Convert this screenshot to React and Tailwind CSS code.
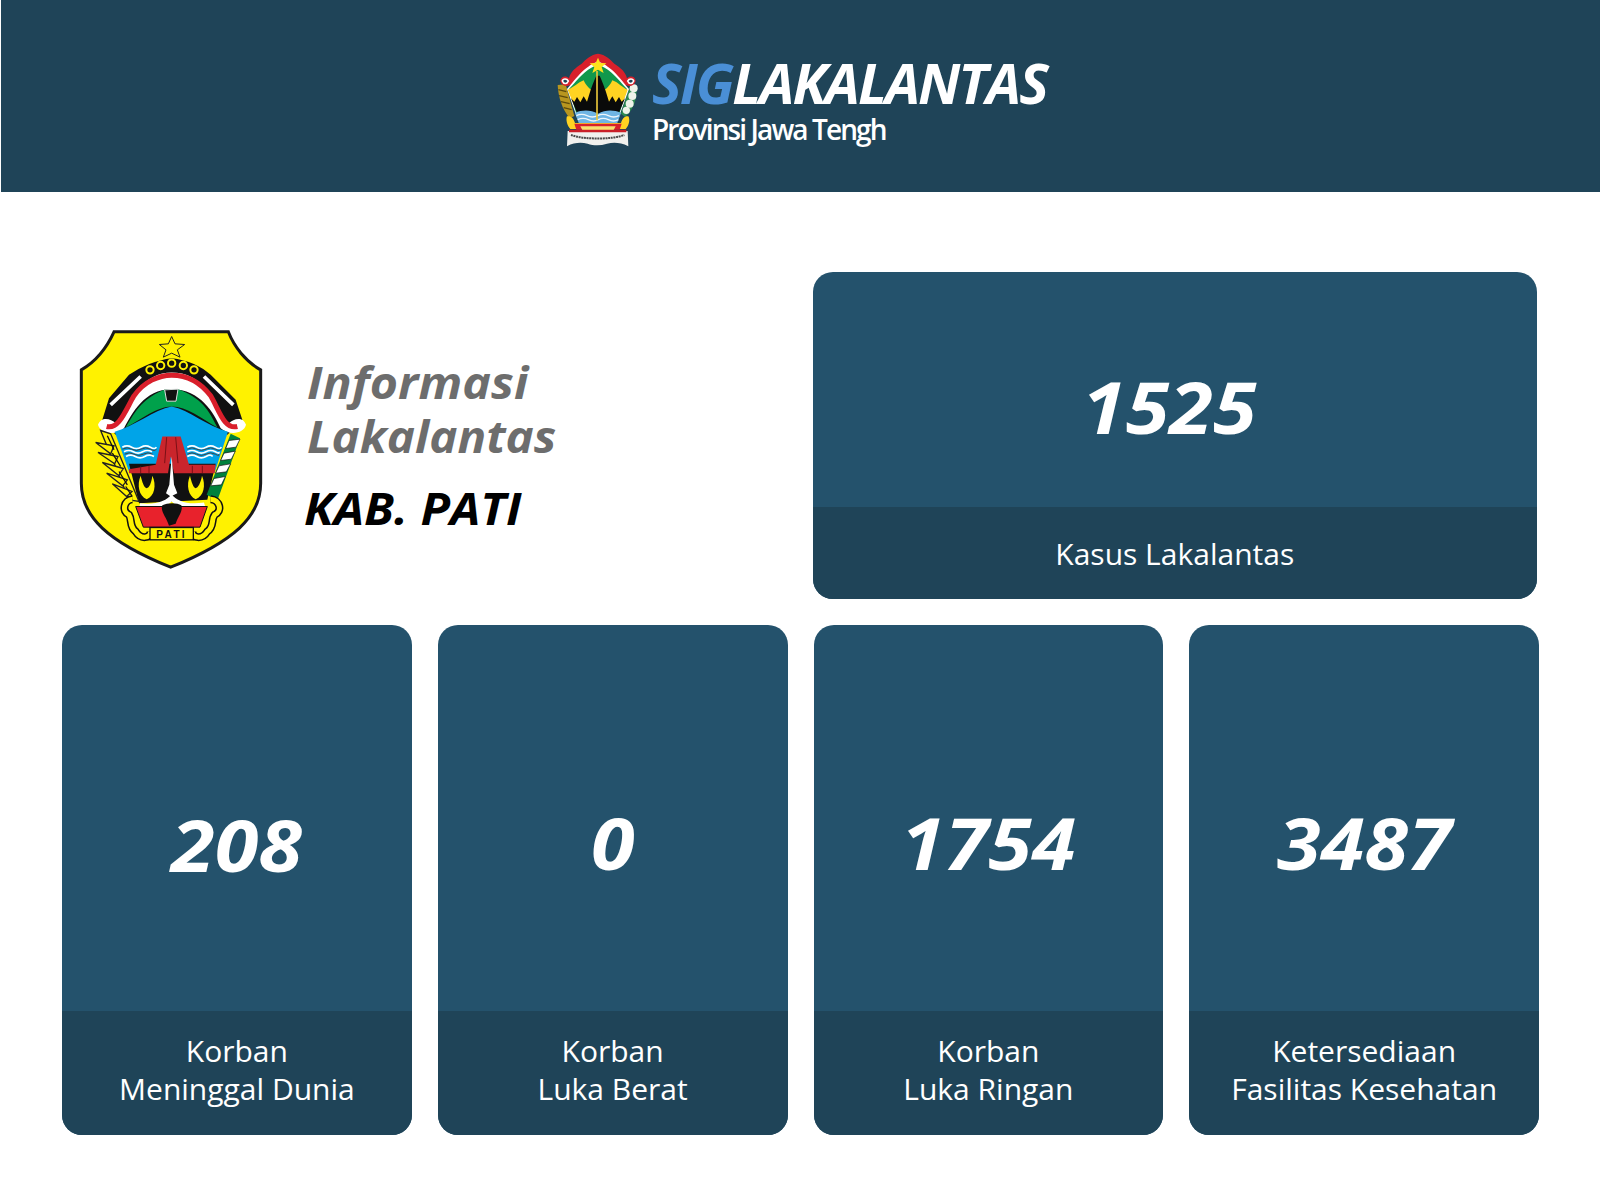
import React from "react";

const font = { fontFamily: '"Open Sans", sans-serif' };

// Pati regency crest, coordinates follow a 3x crop of the reference
const PatiCrest = () => (
  <svg viewBox="55 58 552 722" className="w-[184px] h-[241px] shrink-0">
    <path d="M160 66 L503 66 C520 110 555 155 600 180 L600 520 C600 620 520 695 330 772 C140 695 62 620 62 520 L62 180 C105 155 140 110 160 66Z" fill="#fff200" stroke="#1a1a1a" strokeWidth="9" />
    <path d="M333 80 L343 102 L372 104 L350 120 L358 142 L333 130 L308 142 L316 120 L296 104 L323 102Z" fill="#fff200" stroke="#222" strokeWidth="3" />
    <path d="M205 195 C240 170 290 150 333 145 C380 150 425 170 450 195 L525 270 L545 330 L500 375 L165 375 L125 330 L145 265Z" fill="#111" />
    <g fill="none" stroke="#fff200" strokeWidth="6">
      <circle cx="268" cy="180" r="11" /><circle cx="300" cy="167" r="11" /><circle cx="333" cy="160" r="11" /><circle cx="368" cy="167" r="11" /><circle cx="400" cy="180" r="11" />
    </g>
    <path d="M150 285 L240 200 M430 200 L518 285" stroke="#fff" strokeWidth="11" fill="none" />
    <path d="M112 345 C120 320 150 325 165 340 C190 340 200 290 225 250 C255 205 295 188 333 188 C375 188 415 205 445 250 C470 290 480 340 505 340 C520 325 548 320 556 345 C550 372 505 378 480 355 C460 310 420 238 333 238 C250 238 215 310 190 355 C170 378 118 372 112 345Z" fill="#fff" />
    <path d="M138 350 C175 360 195 300 220 258 C250 215 295 196 333 196 C380 196 420 218 450 258 C475 300 490 360 530 350" fill="none" stroke="#d91f2b" strokeWidth="15" />
    <path d="M195 353 C225 300 250 262 315 238 L352 238 C420 262 445 300 470 353 C420 325 380 290 333 290 C290 290 240 330 195 353Z" fill="#00a14b" />
    <path d="M312 240 L352 238 L346 274 L318 274Z" fill="#111" stroke="#ddd" strokeWidth="3" />
    <path d="M162 366 C220 350 280 300 333 290 C385 300 440 350 502 366 L462 488 L206 488Z" fill="#00a4e8" />
    <path d="M185 412 q14 -8 28 0 t28 0 t28 0 t18 0 M190 426 q14 -8 28 0 t28 0 t28 0 M196 440 q14 -8 28 0 t28 0 t28 0 M380 412 q14 -8 28 0 t28 0 t28 0 t18 0 M380 426 q14 -8 28 0 t28 0 t28 0 t10 0 M380 440 q14 -8 28 0 t28 0 t20 0" fill="none" stroke="#fff" strokeWidth="5" />
    <path d="M185 418 q14 -8 28 0 t28 0 t28 0 t18 0 M192 433 q14 -8 28 0 t28 0 t28 0 M380 418 q14 -8 28 0 t28 0 t28 0 t18 0 M380 433 q14 -8 28 0 t28 0 t28 0 t10 0" fill="none" stroke="#444" strokeWidth="3" />
    <path d="M205 462 L465 462 L440 570 L235 580Z" fill="#111" />
    <path d="M305 380 L360 380 L385 465 L465 465 L462 490 L380 490 L340 490 L330 440 L322 490 L205 490 L205 478 L285 465Z" fill="#c9252c" />
    <path d="M318 382 L312 460 M345 382 L352 460 M240 470 L240 490 M265 468 L265 490 M395 468 L395 490 M425 468 L425 490" stroke="#7a1016" strokeWidth="3" />
    <path d="M333 440 L340 525 L350 550 L330 560 L316 550 L326 525Z" fill="#fff" />
    <path d="M240 498 C228 525 235 560 258 568 C282 560 288 525 275 498 C272 520 266 535 258 535 C250 535 244 515 240 498Z M388 498 C376 525 383 560 405 568 C430 560 436 525 424 498 C420 520 412 535 405 535 C398 535 392 515 388 498Z" fill="#fff200" />
    <path d="M238 580 C285 586 318 573 333 553 C348 573 380 586 430 578 L434 592 C385 600 345 590 333 575 C320 590 280 600 236 594Z" fill="#fff" />
    <path d="M120 362 L150 372 L235 575 L205 570Z" fill="#fff200" stroke="#222" strokeWidth="4" />
    <path d="M105 398 L160 408 L150 432Z M112 428 L172 440 L162 462Z M125 458 L188 476 L174 497Z M138 490 L200 510 L186 528Z M155 522 L214 545 L198 560Z" fill="#fff200" stroke="#222" strokeWidth="4" />
    <path d="M140 378 L160 420 M155 430 L180 470 M175 485 L200 525 M195 530 L215 560" stroke="#111" strokeWidth="4" />
    <path d="M510 372 L538 385 L470 572 L438 555Z" fill="#00813d" />
    <path d="M505 392 L538 388 L526 412 L495 416Z M490 430 L524 424 L512 448 L480 452Z M475 468 L510 462 L497 486 L465 490Z M460 506 L494 500 L482 525 L450 528Z" fill="#fff" stroke="#111" strokeWidth="2" />
    <path d="M225 590 L440 590 L418 652 L248 652Z" fill="#e8222c" stroke="#111" strokeWidth="3" />
    <path d="M305 586 C320 578 350 578 362 586 C368 605 352 618 345 642 L325 648 C318 622 298 605 305 586Z" fill="#111" />
    <path d="M215 568 C190 570 182 605 205 615 C215 630 205 650 225 665 C240 690 270 685 270 665" fill="none" stroke="#111" strokeWidth="24" />
    <path d="M215 568 C190 570 182 605 205 615 C215 630 205 650 225 665 C240 690 270 685 270 665" fill="none" stroke="#fff200" strokeWidth="15" />
    <path d="M450 568 C478 570 486 605 462 615 C450 630 462 650 440 665 C425 690 395 685 395 665" fill="none" stroke="#111" strokeWidth="24" />
    <path d="M450 568 C478 570 486 605 462 615 C450 630 462 650 440 665 C425 690 395 685 395 665" fill="none" stroke="#fff200" strokeWidth="15" />
    <rect x="268" y="653" width="130" height="37" fill="#fff200" stroke="#111" strokeWidth="4" />
    <text x="333" y="684" textAnchor="middle" fontSize="30" fontWeight="700" letterSpacing="7" fill="#111" fontFamily="Liberation Sans, sans-serif">PATI</text>
  </svg>
);

// Central Java provincial crest in the header, traced from a 3x crop
const JatengCrest = () => (
  <svg viewBox="20 16 246 282" preserveAspectRatio="none" className="w-[82px] h-[94px] shrink-0">
    {/* rice and cotton */}
    <path d="M22 112 L46 110 L72 205 L58 212 C36 185 24 150 22 112Z" fill="#b8961f" />
    <path d="M24 126 L48 132 M26 144 L52 150 M32 162 L58 168 M40 180 L64 186" stroke="#5c4a0c" strokeWidth="4" />
    <path d="M240 112 L258 120 C262 150 250 185 224 208 L212 198Z" fill="#2c8a50" />
    <g fill="#eef3ea">
      <circle cx="250" cy="122" r="12" /><circle cx="246" cy="145" r="12" /><circle cx="238" cy="168" r="12" /><circle cx="228" cy="188" r="11" />
    </g>
    {/* red border with white curls */}
    <path d="M30 100 C32 84 48 84 56 92 C60 72 76 60 94 48 C106 36 122 20 143 18 C165 20 180 36 192 48 C210 60 226 72 230 92 C238 84 254 84 256 100 C252 116 236 118 228 112 L205 205 L80 205 L58 112 C50 118 34 116 30 100Z" fill="#d8202b" />
    <path d="M36 100 C38 92 50 92 54 100 C50 110 40 110 36 100Z M232 100 C236 92 248 92 250 100 C246 110 236 110 232 100Z" fill="#1f4458" stroke="#fff" strokeWidth="5" />
    <path d="M50 124 C62 112 78 88 100 68 C112 58 128 44 143 42 C158 44 174 58 186 68 C208 88 224 112 236 124 L205 210 L80 210Z" fill="#fff" />
    <path d="M56 124 C68 112 84 92 104 74 C116 64 130 54 143 52 C156 54 170 64 182 74 C202 92 218 112 230 124 L205 205 L80 205Z" fill="#11984c" />
    {/* yellow peaks */}
    <path d="M52 126 C66 122 84 104 100 98 C106 112 118 126 130 130 L132 170 L70 170Z M232 126 C218 122 204 104 186 98 C180 112 168 126 156 130 L154 170 L216 170Z" fill="#ffd322" />
    {/* black ship body with jagged edge */}
    <path d="M62 152 L72 162 L80 148 L90 164 L100 146 L110 162 L120 130 C126 112 134 92 138 84 L148 84 C152 92 160 112 166 130 L176 162 L186 146 L196 164 L206 148 L214 162 L224 152 L204 200 L82 200Z" fill="#0a0a0a" />
    {/* waves */}
    <path d="M74 196 C96 186 120 186 143 198 C166 186 190 186 212 196 L200 228 L86 228Z" fill="#6fb5e4" />
    <path d="M78 204 q16 -8 32 0 t32 0 t32 0 t32 0 M82 216 q16 -8 32 0 t30 0 t30 0 t30 0" fill="none" stroke="#eef6fb" strokeWidth="4" />
    {/* mast */}
    <path d="M140 70 L140 218" stroke="#e8c53a" strokeWidth="5" />
    <path d="M143 30 L150 46 L168 47 L154 58 L160 76 L143 66 L126 76 L132 58 L118 47 L136 46Z" fill="#ffe21a" />
    {/* lower ribbon */}
    <path d="M50 206 C62 204 70 212 74 226 L212 226 C216 212 224 204 234 206 C240 216 236 234 226 244 L60 244 C50 234 46 216 50 206Z" fill="#ffd322" />
    <path d="M72 228 L214 228 L208 246 L78 246Z" fill="#d8202b" />
    <path d="M90 236 L196 236 L190 247 L96 247Z" fill="#f8e070" />
    <path d="M52 250 L232 250 L234 296 C210 284 190 284 170 288 C150 294 130 294 112 288 C92 284 72 284 50 296Z" fill="#f1f1ee" />
    <path d="M62 262 C100 276 186 276 222 262" fill="none" stroke="#4a4a4a" strokeWidth="6" strokeDasharray="6 2" />
    <path d="M56 246 L228 246 L228 254 L56 254Z" fill="#c92028" />
  </svg>
);

const StatCard = ({ value, labels, valueClass }) => (
  <div className="flex flex-col h-[510px] rounded-[20px] overflow-hidden bg-[#24526c]">
    <div className={`flex-1 flex items-center justify-center text-white font-bold italic text-[72px] ${valueClass}`}>
      <span className="inline-block scale-x-110">{value}</span>
    </div>
    <div className="h-[124px] pb-[7px] bg-[#1f4458] flex flex-col items-center justify-center text-white text-[30px] leading-[38px]">
      {labels.map((l) => (
        <span key={l}>{l}</span>
      ))}
    </div>
  </div>
);

const cards = [
  { value: "208", labels: ["Korban", "Meninggal Dunia"], valueClass: "pt-[52px]" },
  { value: "0", labels: ["Korban", "Luka Berat"], valueClass: "pt-[48px]" },
  { value: "1754", labels: ["Korban", "Luka Ringan"], valueClass: "pt-[48px]" },
  { value: "3487", labels: ["Ketersediaan", "Fasilitas Kesehatan"], valueClass: "pt-[48px]" },
];

export default function App() {
  return (
    <div className="w-[1600px] h-[1200px] bg-white" style={font}>
      {/* Header */}
      <header className="h-[192px] ml-px bg-[#1f4458] flex items-center justify-center pl-[3px] pt-[8px]">
        <JatengCrest />
        <div className="ml-[13px] flex flex-col text-white">
          <div className="text-[56px] leading-[56px] font-bold italic tracking-[-2px]">
            <span className="text-[#4a8fd6]">SIG</span>LAKALANTAS
          </div>
          <div className="mt-[2px] text-[28px] leading-[34px] tracking-[-1.9px] font-semibold">Provinsi Jawa Tengh</div>
        </div>
      </header>

      <main className="pl-[62px] pr-[61px] pt-[80px]">
        {/* Top row */}
        <div className="grid grid-cols-4 gap-x-[26px] h-[327px]">
          <div className="col-span-2 flex items-center pl-[17px] pt-[19px]">
            <div className="mt-[9px]">
              <PatiCrest />
            </div>
            <div className="ml-[44px] flex flex-col items-start">
              <span className="origin-left scale-x-110 text-[#6d6d6d] font-bold italic text-[44px] leading-[54px]">Informasi</span>
              <span className="origin-left scale-x-[1.08] text-[#6d6d6d] font-bold italic text-[44px] leading-[54px]">Lakalantas</span>
              <span className="origin-left scale-x-110 text-black font-bold italic text-[44px] leading-[54px] mt-[18px] -ml-[3px]">KAB. PATI</span>
            </div>
          </div>
          <div className="col-span-2 -ml-px mr-[2px] flex flex-col rounded-[20px] overflow-hidden bg-[#24526c]">
            <div className="flex-1 flex items-center justify-center pt-[32px] pr-[10px] text-white font-bold italic text-[72px]">
              <span className="inline-block scale-x-110">1525</span>
            </div>
            <div className="h-[92px] bg-[#1f4458] flex items-center justify-center text-white text-[30px]">Kasus Lakalantas</div>
          </div>
        </div>

        {/* Bottom row */}
        <div className="grid grid-cols-4 gap-x-[26px] mt-[26px]">
          {cards.map((c) => (
            <StatCard key={c.value} {...c} />
          ))}
        </div>
      </main>
    </div>
  );
}
